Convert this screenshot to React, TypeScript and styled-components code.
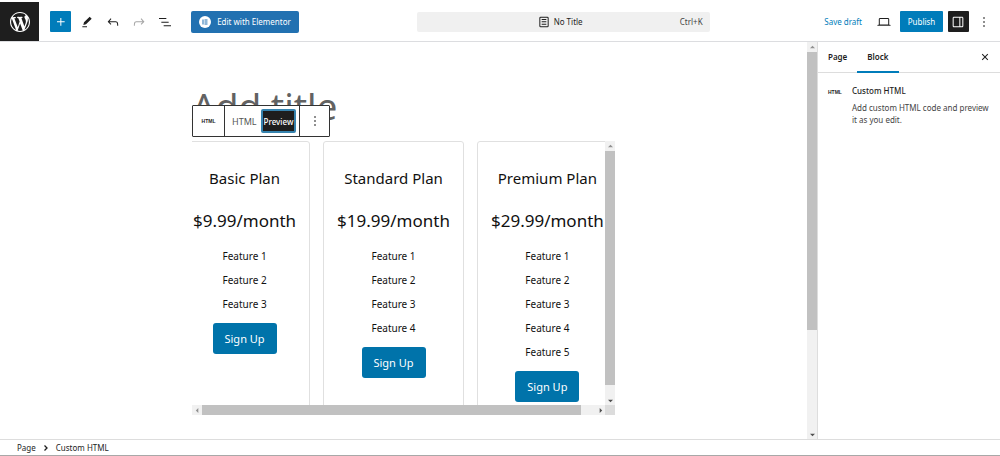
import React from "react";
import styled, { createGlobalStyle } from "styled-components";

const GlobalStyle = createGlobalStyle`
  *, *::before, *::after { box-sizing: border-box; }
  body {
    margin: 0;
    background: #fff;
    color: #1e1e1e;
    font-family: "Noto Sans", "Open Sans", sans-serif;
    font-size: 8px;
  }
  button { font: inherit; color: inherit; border: 0; padding: 0; background: none; cursor: pointer; }
  h1, h2, h3, p, ul { margin: 0; padding: 0; font-weight: 400; }
  ul { list-style: none; }
  a { text-decoration: none; }
  svg { display: block; fill: currentColor; flex: none; }
`;

const Page = styled.div`
  display: flex;
  flex-direction: column;
  height: 100vh;
  min-height: 440px;
  border-bottom: 1px solid #a8a8a8;
`;

const Header = styled.header`
  display: flex;
  align-items: center;
  flex: none;
  padding-top: 2px;
  border-bottom: 1px solid #dcdde0;
`;

const SiteLogo = styled.a`
  display: grid;
  place-items: center;
  width: 39px;
  height: 39px;
  background: #1e1e1e;
  color: #fff;
`;

const Tools = styled.div`
  display: flex;
  align-items: center;
  gap: 5px;
  padding: 0 3px 0 11px;
`;

const IconButton = styled.button<{ $tone?: "primary" | "dark" | "faint" }>`
  display: grid;
  place-items: center;
  width: 21px;
  height: 21px;
  border-radius: 1px;
  background: ${(p) => (p.$tone === "primary" ? "#007cba" : p.$tone === "dark" ? "#1e1e1e" : "none")};
  color: ${(p) => (p.$tone === "faint" ? "#a5a5a5" : p.$tone ? "#fff" : "#1e1e1e")};
`;

const ElementorButton = styled.button`
  display: flex;
  align-items: center;
  justify-content: center;
  gap: 6px;
  width: 108px;
  height: 22px;
  margin-left: 11px;
  border-radius: 2px;
  background: #2271b1;
  color: #fff;
  white-space: nowrap;
`;

const CommandBar = styled.button`
  display: grid;
  grid-template-columns: 1fr auto 1fr;
  align-items: center;
  flex: 0 1 293px;
  height: 20px;
  margin: 0 auto;
  padding: 0 7px;
  border-radius: 2px;
  background: #f0f0f0;
`;

const DocumentName = styled.span`
  display: flex;
  grid-column: 2;
  align-items: center;
  gap: 2px;
  padding-right: 8px;
`;

const Shortcut = styled.span`
  justify-self: end;
  color: #444;
`;

const Actions = styled.div`
  display: flex;
  align-items: center;
  gap: 5px;
  padding-right: 5px;
`;

const SaveLink = styled.button`
  margin-right: 7px;
  color: #007cba;
`;

const PublishButton = styled.button`
  width: 43px;
  height: 21px;
  border-radius: 1px;
  background: #007cba;
  color: #fff;
`;

const Workspace = styled.div`
  display: flex;
  flex: 1;
  min-height: 0;
`;

const Canvas = styled.main`
  flex: 1;
  min-width: 0;
  overflow: hidden;
`;

const Content = styled.div`
  width: 423px;
  max-width: 100%;
  margin: 0 auto;
  padding-top: 36px;
`;

const TitleArea = styled.div`
  position: relative;
  height: 63px;
`;

const Title = styled.h1`
  color: #626262;
  font-size: 37px;
  line-height: 56px;
`;

const BlockToolbar = styled.div`
  position: absolute;
  left: 0;
  bottom: 4px;
  display: flex;
  height: 32px;
  border: 1px solid #333;
  border-radius: 1px;
  background: #fff;
`;

const ToolbarGroup = styled.div`
  display: flex;
  align-items: center;
  padding: 0 3px;
  & + & { border-left: 1px solid #333; }
  &:last-child { padding: 0 4px; }
`;

const HtmlMark = styled.span`
  width: 14px;
  font: bold 5px/8px "Liberation Sans", sans-serif;
`;

const BlockTypeButton = styled.button`
  display: grid;
  place-items: center;
  width: 25px;
  height: 24px;
`;

const ModeButton = styled.button<{ $active?: boolean }>`
  height: 24px;
  padding: 0 ${(p) => (p.$active ? 1 : 4)}px;
  border: ${(p) => (p.$active ? "2px solid #3582ad" : "0")};
  border-radius: 2px;
  background: ${(p) => (p.$active ? "#1e1e1e" : "none")};
  color: ${(p) => (p.$active ? "#fff" : "#555")};
  font-size: ${(p) => (p.$active ? 8 : 9)}px;
  font-weight: ${(p) => (p.$active ? 500 : 400)};
`;

const PreviewFrame = styled.section`
  display: grid;
  grid-template-columns: minmax(0, 1fr) 10px;
  grid-template-rows: 264px 10px;
`;

const Plans = styled.div`
  display: flex;
  gap: 13px;
  overflow: hidden;
`;

const PlanCard = styled.article<{ $cut?: boolean }>`
  display: flex;
  flex-direction: column;
  align-items: center;
  flex: none;
  height: 290px;
  margin-left: ${(p) => (p.$cut ? -13 : 0)}px;
  padding: 24px 13px;
  border: 1px solid #e0e0e0;
  border-radius: 3px;
  color: #111;
`;

const PlanName = styled.h2`
  font-size: 15px;
  line-height: 24px;
`;

const Price = styled.p`
  margin: 17px 0 9px;
  font-size: 17px;
  line-height: 28px;
`;

const Feature = styled.li`
  font-size: 10px;
  line-height: 24px;
  text-align: center;
`;

const SignUp = styled.button`
  width: 64px;
  height: 31px;
  margin-top: 7px;
  border-radius: 3px;
  background: #0073aa;
  color: #fff;
  font-size: 11px;
`;

const Bar = styled.div<{ $row?: boolean }>`
  display: flex;
  flex-direction: ${(p) => (p.$row ? "row" : "column")};
  background: #f1f1f1;
  color: #505050;
`;

const BarEnd = styled.span`
  display: grid;
  place-items: center;
  flex: none;
  width: 10px;
  height: 10px;
`;

const Thumb = styled.span<{ $size: number }>`
  flex: ${(p) => p.$size} 0 0;
  background: #c1c1c1;
`;

const Rest = styled.span<{ $size: number }>`
  flex: ${(p) => p.$size} 0 0;
`;

const Corner = styled.div`
  background: #dcdcdc;
`;

const Sidebar = styled.aside`
  flex: none;
  width: 183px;
  border-left: 1px solid #ddd;
`;

const Tabs = styled.div`
  display: flex;
  align-items: stretch;
  height: 31px;
  padding-right: 5px;
  border-bottom: 1px solid #ddd;
`;

const Tab = styled.button<{ $active?: boolean }>`
  padding: 0 10px;
  margin-bottom: -1px;
  border-bottom: 2px solid ${(p) => (p.$active ? "#007cba" : "transparent")};
  font-weight: 600;
`;

const CloseSlot = styled.div`
  display: flex;
  align-items: center;
  margin-left: auto;
`;

const BlockCard = styled.section`
  display: flex;
  gap: 9px;
  padding: 12px 10px;
`;

const BlockMark = styled.div`
  flex: none;
  width: 15px;
`;

const BlockName = styled.h2`
  font-size: 8px;
  font-weight: 500;
  line-height: 12px;
`;

const BlockText = styled.p`
  margin-top: 5px;
  color: #444;
  line-height: 12px;
`;

const Footer = styled.footer`
  display: flex;
  align-items: center;
  flex: none;
  gap: 7px;
  height: 16px;
  padding-left: 17px;
  border-top: 1px solid #ddd;
  line-height: 14px;
`;

const paths = {
  plus: "M11 12.5V17.5H12.5V12.5H17.5V11H12.5V6H11V11H6V12.5H11Z",
  edit: "m19 7-3-3-8.5 8.5-1 4 4-1L19 7Zm-7 11.5H5V20h7v-1.5Z",
  undo: "M18.3 11.7c-.6-.6-1.4-.9-2.3-.9H6.7l2.9-3.3-1.1-1-4.5 5L8.5 16l1-1-2.7-2.7H16c.5 0 .9.2 1.3.5 1 1 1 3.4 1 4.5v.3h1.5v-.2c0-1.5 0-4.3-1.5-5.7z",
  redo: "M15.6 6.5l-1.1 1 2.9 3.3H8c-.9 0-1.7.3-2.3.9-1.4 1.5-1.4 4.2-1.4 5.6v.2h1.5v-.3c0-1.1 0-3.5 1-4.5.3-.3.7-.5 1.3-.5h9.2L14.5 15l1.1 1.1 4.6-4.6-4.6-5z",
  list: "M3 6h11v1.5H3V6Zm3.5 5.5h11V13h-11v-1.5ZM21 17H10v1.5h11V17Z",
  laptop: "M20.5 16h-.7V8c0-1.1-.9-2-2-2H6.2c-1.1 0-2 .9-2 2v8h-.7c-.8 0-1.5.7-1.5 1.5h20c0-.8-.7-1.5-1.5-1.5zM5.7 8c0-.3.2-.5.5-.5h11.6c.3 0 .5.2.5.5v7.6H5.7V8z",
  drawer: "M18 4H6c-1.1 0-2 .9-2 2v12c0 1.1.9 2 2 2h12c1.1 0 2-.9 2-2V6c0-1.1-.9-2-2-2zm-4 14.5H6c-.3 0-.5-.2-.5-.5V6c0-.3.2-.5.5-.5h8v13zm4.5-.5c0 .3-.2.5-.5.5h-2.5v-13H18c.3 0 .5.2.5.5v12z",
  more: "M13 19h-2v-2h2v2zm0-6h-2v-2h2v2zm0-6h-2V5h2v2z",
  page: "M15.5 7.5h-7V9h7V7.5Zm-7 3.5h7v1.5h-7V11Zm7 3.5h-7V16h7v-1.5ZM17 4H7a2 2 0 0 0-2 2v12a2 2 0 0 0 2 2h10a2 2 0 0 0 2-2V6a2 2 0 0 0-2-2ZM7 5.5h10a.5.5 0 0 1 .5.5v12a.5.5 0 0 1-.5.5H7a.5.5 0 0 1-.5-.5V6a.5.5 0 0 1 .5-.5Z",
  close: "M12 13.06l3.712 3.713 1.061-1.06L13.061 12l3.712-3.712-1.06-1.06L12 10.938 8.288 7.227l-1.061 1.06L10.939 12l-3.712 3.712 1.06 1.061L12 13.061z",
  wordpress:
    "M20 10c0-5.51-4.49-10-10-10C4.48 0 0 4.49 0 10c0 5.52 4.48 10 10 10 5.51 0 10-4.48 10-10zM7.78 15.37L4.37 6.22c.55-.02 1.17-.08 1.17-.08.5-.06.44-1.13-.06-1.11 0 0-1.45.11-2.37.11-.18 0-.37 0-.58-.01C4.12 2.69 6.87 1.11 10 1.11c2.33 0 4.45.87 6.05 2.34-.68-.11-1.65.39-1.65 1.58 0 .74.45 1.36.9 2.1.35.61.55 1.36.55 2.46 0 1.49-1.4 5-1.4 5l-3.03-8.37c.54-.02.82-.17.82-.17.5-.05.44-1.25-.06-1.22 0 0-1.44.12-2.38.12-.87 0-2.33-.12-2.33-.12-.5-.03-.56 1.2-.06 1.22l.92.08 1.26 3.41zM17.41 10c.24-.64.74-1.87.43-4.25.7 1.29 1.05 2.71 1.05 4.25 0 3.29-1.73 6.24-4.4 7.78.97-2.59 1.94-5.2 2.92-7.78zM6.1 18.09C3.12 16.65 1.11 13.53 1.11 10c0-1.3.23-2.48.72-3.59C3.25 10.3 4.67 14.2 6.1 18.09zm4.03-6.63l2.58 6.98c-.86.29-1.76.45-2.71.45-.79 0-1.57-.11-2.29-.33.81-2.38 1.62-4.74 2.42-7.1z",
};

const Icon = ({ name, size = 16 }: { name: keyof typeof paths; size?: number }) => (
  <svg width={size} height={size} viewBox="0 0 24 24" aria-hidden="true">
    <path d={paths[name]} fillRule={name === "page" ? "evenodd" : "nonzero"} />
  </svg>
);

const arrows = {
  up: "M0 4l3-3 3 3z",
  down: "M0 2l3 3 3-3z",
  left: "M4 0L1 3l3 3z",
  right: "M2 0l3 3-3 3z",
};

const Arrow = ({ dir }: { dir: keyof typeof arrows }) => (
  <BarEnd>
    <svg width="5" height="5" viewBox="0 0 6 6" aria-hidden="true">
      <path d={arrows[dir]} opacity={dir === "up" || dir === "left" ? 0.6 : 1} />
    </svg>
  </BarEnd>
);

const ScrollTrack = ({ row, thumb, rest }: { row?: boolean; thumb: number; rest: number }) => (
  <Bar $row={row} aria-hidden="true">
    <Arrow dir={row ? "left" : "up"} />
    <Thumb $size={thumb} />
    <Rest $size={rest} />
    <Arrow dir={row ? "right" : "down"} />
  </Bar>
);

const MainScroll = styled.div`
  display: grid;
  flex: none;
  width: 10px;
`;

const plans = [
  { name: "Basic Plan", price: "$9.99/month", features: 3 },
  { name: "Standard Plan", price: "$19.99/month", features: 4 },
  { name: "Premium Plan", price: "$29.99/month", features: 5 },
];

export default function App() {
  return (
    <Page>
      <GlobalStyle />
      <Header>
        <SiteLogo href="#" aria-label="View pages">
          <svg width="20" height="20" viewBox="0 0 20 20" aria-hidden="true">
            <path d={paths.wordpress} />
          </svg>
        </SiteLogo>
        <Tools>
          <IconButton $tone="primary" aria-label="Add block"><Icon name="plus" /></IconButton>
          <IconButton aria-label="Tools"><Icon name="edit" /></IconButton>
          <IconButton aria-label="Undo"><Icon name="undo" /></IconButton>
          <IconButton $tone="faint" aria-label="Redo"><Icon name="redo" /></IconButton>
          <IconButton aria-label="Document overview"><Icon name="list" /></IconButton>
          <ElementorButton>
            <svg width="12" height="12" viewBox="0 0 12 12" aria-hidden="true">
              <circle cx="6" cy="6" r="6" />
              <path fill="#2271b1" d="M3.5 3.5h1v5h-1zM5.5 3.5h3v1h-3zM5.5 5.5h3v1h-3zM5.5 7.5h3v1h-3z" />
            </svg>
            Edit with Elementor
          </ElementorButton>
        </Tools>
        <CommandBar>
          <DocumentName><Icon name="page" />No Title</DocumentName>
          <Shortcut>Ctrl+K</Shortcut>
        </CommandBar>
        <Actions>
          <SaveLink>Save draft</SaveLink>
          <IconButton aria-label="View"><Icon name="laptop" /></IconButton>
          <PublishButton>Publish</PublishButton>
          <IconButton $tone="dark" aria-label="Settings"><Icon name="drawer" /></IconButton>
          <IconButton aria-label="Options"><Icon name="more" /></IconButton>
        </Actions>
      </Header>

      <Workspace>
        <Canvas>
          <Content>
            <TitleArea>
              <Title>Add title</Title>
              <BlockToolbar role="toolbar" aria-label="Block tools">
                <ToolbarGroup>
                  <BlockTypeButton aria-label="Custom HTML"><HtmlMark>HTML</HtmlMark></BlockTypeButton>
                </ToolbarGroup>
                <ToolbarGroup>
                  <ModeButton>HTML</ModeButton>
                  <ModeButton $active>Preview</ModeButton>
                </ToolbarGroup>
                <ToolbarGroup>
                  <IconButton aria-label="More"><Icon name="more" /></IconButton>
                </ToolbarGroup>
              </BlockToolbar>
            </TitleArea>
            <PreviewFrame>
              <Plans>
                {plans.map((plan, i) => (
                  <PlanCard key={plan.name} $cut={i === 0}>
                    <PlanName>{plan.name}</PlanName>
                    <Price>{plan.price}</Price>
                    <ul>
                      {Array.from({ length: plan.features }, (_, n) => (
                        <Feature key={n}>Feature {n + 1}</Feature>
                      ))}
                    </ul>
                    <SignUp>Sign Up</SignUp>
                  </PlanCard>
                ))}
              </Plans>
              <ScrollTrack thumb={234} rest={10} />
              <ScrollTrack row thumb={379} rest={14} />
              <Corner />
            </PreviewFrame>
          </Content>
        </Canvas>
        <MainScroll><ScrollTrack thumb={278} rest={99} /></MainScroll>
        <Sidebar>
          <Tabs>
            <Tab>Page</Tab>
            <Tab $active>Block</Tab>
            <CloseSlot>
              <IconButton aria-label="Close settings"><Icon name="close" /></IconButton>
            </CloseSlot>
          </Tabs>
          <BlockCard>
            <BlockMark><HtmlMark>HTML</HtmlMark></BlockMark>
            <div>
              <BlockName>Custom HTML</BlockName>
              <BlockText>Add custom HTML code and preview it as you edit.</BlockText>
            </div>
          </BlockCard>
        </Sidebar>
      </Workspace>

      <Footer>
        <span>Page</span>
        <svg width="6" height="8" viewBox="0 0 6 8" aria-hidden="true">
          <path fill="none" stroke="currentColor" strokeWidth="1.3" d="M1.5 1.5L4 4 1.5 6.5" />
        </svg>
        <span>Custom HTML</span>
      </Footer>
    </Page>
  );
}
